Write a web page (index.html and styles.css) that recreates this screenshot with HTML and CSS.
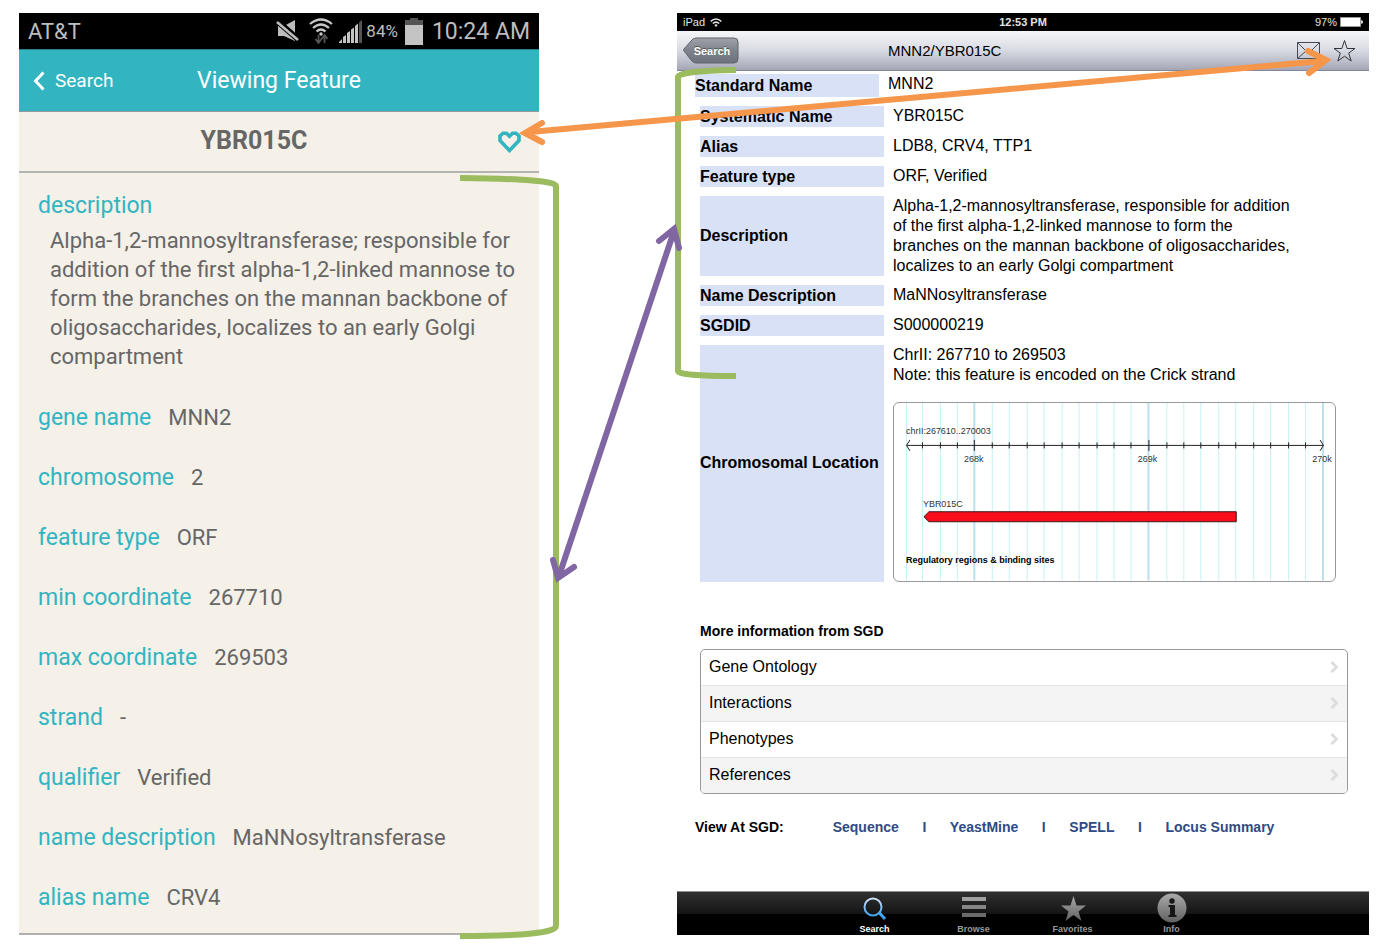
FILE: index.html
```html
<!DOCTYPE html>
<html lang="en">
<head>
<meta charset="utf-8">
<meta name="viewport" content="width=device-width, initial-scale=1">
<title>Feature view comparison</title>
<link rel="stylesheet" href="styles.css">
</head>
<body>
<main class="board">
  <section class="phone" aria-label="Phone screen">
    <div class="phone-status">
      <span class="carrier">AT&amp;T</span>
      <svg class="icon-mute" width="24" height="22" viewBox="0 0 24 22" aria-hidden="true"><path d="M2 6h6l11-6v21L8 16H2z" fill="#bdbdbd"/><path d="M0 0l23 20" stroke="#000" stroke-width="6"/><path d="M1 2l21 18" stroke="#bdbdbd" stroke-width="2.600"/></svg>
      <svg class="icon-wifi" width="24" height="26" viewBox="0 0 24 26" fill="none" aria-hidden="true"><g stroke="#c8c8c8" stroke-width="2.200"><path d="M1 6Q12-3 23 6"/><path d="M4 10Q12 3 20 10"/><path d="M7.500 13.500Q12 9.500 16.500 13.500"/></g><circle cx="12" cy="16" r="1.700" fill="#c8c8c8"/><path d="M9.500 17v7M6.500 21l3 4 3-4M15.500 25v-7M12.500 21l3-4 3 4" stroke="#555" stroke-width="1.800"/></svg>
      <svg class="icon-signal" width="23" height="23" viewBox="0 0 23 23" aria-hidden="true"><path d="M0 23v-1l3-3v4zM4 23v-6l3-2v8zM8 23V13l3-2v12zM12 23V9.500L15 7.500V23zM16 23V6l3-2.500V23z" fill="#c4c4c4"/><path d="M20 23V2.500L23 0v23z" fill="#555"/></svg>
      <span class="percent">84%</span>
      <svg class="icon-battery" width="18" height="27" viewBox="0 0 18 27" aria-hidden="true"><path d="M5 0h8v2h5v5H0V2h5z" fill="#555"/><path d="M0 7h18v20H0z" fill="#c4c4c4"/></svg>
      <span class="clock">10:24 AM</span>
    </div>
    <header class="phone-header">
      <button class="phone-back" type="button"><svg width="12" height="20" viewBox="0 0 12 20" aria-hidden="true"><path d="M10.500 1.500L2.500 10l8 8.500" fill="none" stroke="#fff" stroke-width="3"/></svg>Search</button>
      <h1 class="phone-title">Viewing Feature</h1>
    </header>
    <div class="feature-bar">
      <h2 class="feature-name">YBR015C</h2>
      <button class="heart" type="button" aria-label="Favorite"><svg width="25" height="22" viewBox="0 0 25 22" aria-hidden="true"><path d="M12.500 19.500L3 9.500V5L6 2.200h3.500l3 3 3-3H19L22 5v4.500z" fill="none" stroke="#32b5c1" stroke-width="3.600"/></svg></button>
    </div>
    <dl class="fields">
      <div class="field field-long"><dt>description</dt><dd>Alpha-1,2-mannosyltransferase; responsible for addition of the first alpha-1,2-linked mannose to form the branches on the mannan backbone of oligosaccharides, localizes to an early Golgi compartment</dd></div>
      <div class="field"><dt>gene name</dt><dd>MNN2</dd></div>
      <div class="field"><dt>chromosome</dt><dd>2</dd></div>
      <div class="field"><dt>feature type</dt><dd>ORF</dd></div>
      <div class="field"><dt>min coordinate</dt><dd>267710</dd></div>
      <div class="field"><dt>max coordinate</dt><dd>269503</dd></div>
      <div class="field"><dt>strand</dt><dd>-</dd></div>
      <div class="field"><dt>qualifier</dt><dd>Verified</dd></div>
      <div class="field"><dt>name description</dt><dd>MaNNosyltransferase</dd></div>
      <div class="field"><dt>alias name</dt><dd>CRV4</dd></div>
    </dl>
  </section>

  <section class="tablet" aria-label="Tablet screen">
    <div class="tablet-status">
      <span class="device">iPad <svg width="12" height="9" viewBox="0 0 12 9" fill="none" aria-hidden="true"><path d="M.7 3.300Q6-1.300 11.300 3.300M2.800 5.500Q6 2.800 9.200 5.500" stroke="#e4e4e4" stroke-width="1.600"/><path d="M4.300 7L6 9l1.700-2Q6 5.700 4.300 7z" fill="#e4e4e4"/></svg></span>
      <span class="tablet-clock">12:53 PM</span>
      <span class="charge">97% <svg width="23" height="10" viewBox="0 0 23 10" aria-hidden="true"><path d="M.5.500h20v9H.5z" fill="#fff" stroke="#999"/><path d="M21 3l2 1v2l-2 1z" fill="#ccc"/></svg></span>
    </div>
    <header class="tablet-header">
      <button class="tablet-back" type="button">
        <svg class="back-shape" width="56" height="28" viewBox="0 0 56 28" aria-hidden="true"><defs><linearGradient id="back-fill" x2="0" y2="1"><stop offset="0" stop-color="#a0a3a8"/><stop offset=".5" stop-color="#7d828b"/><stop offset="1" stop-color="#6d737d"/></linearGradient></defs><path d="M13 1h38a4 4 0 0 1 4 4v17a4 4 0 0 1-4 4H13Q10 26 8 23L1 14Q0 13 1 12L8 4Q10 1 13 1z" fill="url(#back-fill)" stroke="#60646d"/></svg>
        <span class="back-label">Search</span>
      </button>
      <h2 class="tablet-title">MNN2/YBR015C</h2>
      <div class="tablet-actions">
        <button type="button" aria-label="Mail"><svg width="23" height="17" viewBox="0 0 23 17" fill="none" stroke="#444b55" aria-hidden="true"><path d="M.5.500h22v16H.5zM.5.500L9 9h5L22.500.500M.5 16.500L9 9M14 9l8.500 7.500"/></svg></button>
        <button type="button" aria-label="Add to favorites"><svg width="23" height="24" viewBox="0 0 23 24" fill="none" stroke="#30353c" aria-hidden="true"><path d="M11.500 1.500l2.600 8H22l-6.300 4.600 2.500 7.900-6.700-4.800L4.800 22l2.500-7.900L1 9.500h7.900z"/></svg></button>
      </div>
    </header>
    <div class="tablet-body">
      <table class="facts facts-first">
        <tr><th scope="row">Standard Name</th><td>MNN2</td></tr>
      </table>
      <table class="facts">
        <tr><th scope="row">Systematic Name</th><td>YBR015C</td></tr>
        <tr><th scope="row">Alias</th><td>LDB8, CRV4, TTP1</td></tr>
        <tr><th scope="row">Feature type</th><td>ORF, Verified</td></tr>
        <tr><th scope="row">Description</th><td><p class="summary">Alpha-1,2-mannosyltransferase, responsible for addition of the first alpha-1,2-linked mannose to form the branches on the mannan backbone of oligosaccharides, localizes to an early Golgi compartment</p></td></tr>
        <tr><th scope="row">Name Description</th><td>MaNNosyltransferase</td></tr>
        <tr><th scope="row">SGDID</th><td>S000000219</td></tr>
        <tr><th scope="row">Chromosomal Location</th><td>ChrII: 267710 to 269503<br>Note: this feature is encoded on the Crick strand
          <div class="map">
            <svg class="map-drawing" viewBox="0 0 442 178" role="img" aria-label="Map of chrII from 267610 to 270003">
              <path class="grid" d="M12.500 0v178M28.500 0v178M46.500 0v178M63.500 0v178M98.500 0v178M115.500 0v178M133.500 0v178M150.500 0v178M168.500 0v178M185.500 0v178M203.500 0v178M220.500 0v178M237.500 0v178M273.500 0v178M290.500 0v178M307.500 0v178M325.500 0v178M342.500 0v178M360.500 0v178M377.500 0v178M395.500 0v178M412.500 0v178"/>
              <path class="grid-major" d="M80.500 0v178M255 0v178M430 0v178"/>
              <path class="axis" d="M13 42.500H430M16 37l-3.500 5.500L16 48M427 37l3.500 5.500L427 48M28.500 39.500v6M46.500 39.500v6M63.500 39.500v6M80.500 37v11M98.500 39.500v6M115.500 39.500v6M133.500 39.500v6M150.500 39.500v6M168.500 39.500v6M185.500 39.500v6M203.500 39.500v6M220.500 39.500v6M237.500 39.500v6M255.500 37v11M273.500 39.500v6M290.500 39.500v6M307.500 39.500v6M325.500 39.500v6M342.500 39.500v6M360.500 39.500v6M377.500 39.500v6M395.500 39.500v6M412.500 39.500v6"/>
              <path class="gene" d="M30 114l5-5H343v10H35z"/>
              <text class="map-text" x="12" y="31">chrII:267610..270003</text>
              <text class="map-text map-tick" x="80" y="59">268k</text>
              <text class="map-text map-tick" x="254" y="59">269k</text>
              <text class="map-text map-tick" x="429" y="59">270k</text>
              <text class="map-text" x="29" y="104">YBR015C</text>
              <text class="map-text map-strong" x="12" y="160">Regulatory regions &amp; binding sites</text>
            </svg>
          </div></td></tr>
      </table>
      <h3 class="more-title">More information from SGD</h3>
      <ul class="more-list">
        <li><a href="#">Gene Ontology<svg width="8" height="12" viewBox="0 0 8 12" aria-hidden="true"><path d="M1.500 1l5 5-5 5"/></svg></a></li>
        <li><a href="#">Interactions<svg width="8" height="12" viewBox="0 0 8 12" aria-hidden="true"><path d="M1.500 1l5 5-5 5"/></svg></a></li>
        <li><a href="#">Phenotypes<svg width="8" height="12" viewBox="0 0 8 12" aria-hidden="true"><path d="M1.500 1l5 5-5 5"/></svg></a></li>
        <li><a href="#">References<svg width="8" height="12" viewBox="0 0 8 12" aria-hidden="true"><path d="M1.500 1l5 5-5 5"/></svg></a></li>
      </ul>
      <div class="view-at">
        <span class="view-label">View At SGD:</span>
        <a href="#">Sequence</a><span class="bar">I</span><a href="#">YeastMine</a><span class="bar">I</span><a href="#">SPELL</a><span class="bar">I</span><a href="#">Locus Summary</a>
      </div>
    </div>
    <nav class="tabs" aria-label="Tablet tabs">
      <svg class="defs" width="0" height="0" aria-hidden="true"><defs><linearGradient id="tab-gray" x2="0" y2="1"><stop offset="0" stop-color="#aaa"/><stop offset="1" stop-color="#606060"/></linearGradient><linearGradient id="tab-blue" gradientUnits="userSpaceOnUse" x1="0" y1="4" x2="0" y2="28"><stop offset="0" stop-color="#dce6f5"/><stop offset=".7" stop-color="#4ea8ee"/><stop offset="1" stop-color="#2ba0f2"/></linearGradient></defs></svg>
      <button class="tab tab-active" type="button"><svg width="30" height="30" viewBox="0 0 30 30" fill="none" stroke="url(#tab-blue)" aria-hidden="true"><circle cx="13" cy="14" r="8.500" stroke-width="2"/><path d="M19 19.500l6 6.500" stroke-width="3"/></svg>Search</button>
      <button class="tab" type="button"><svg width="30" height="30" viewBox="0 0 30 30" aria-hidden="true"><path d="M3 4h24v4H3z" fill="#a0a0a0"/><path d="M3 12h24v4H3z" fill="#858585"/><path d="M3 20h24v4H3z" fill="#6b6b6b"/></svg>Browse</button>
      <button class="tab" type="button"><svg width="30" height="30" viewBox="0 0 30 30" fill="url(#tab-gray)" aria-hidden="true"><path d="M15.500 3l3 9.500H28l-7.500 6 3 9.500-8-6-8 6 3-9.500-7.500-6h9.500z"/></svg>Favorites</button>
      <button class="tab" type="button"><svg width="30" height="30" viewBox="0 0 30 30" aria-hidden="true"><circle cx="15" cy="15" r="14.500" fill="url(#tab-gray)"/><circle cx="15" cy="8" r="2.700" fill="#161616"/><path d="M11.500 12H18v10h1.500v2h-8v-2H13v-8h-1.500z" fill="#161616"/></svg>Info</button>
    </nav>
  </section>

  <svg class="annotations" viewBox="0 0 1380 948" preserveAspectRatio="none" aria-hidden="true">
    <g class="bracket">
      <path d="M460 178Q556 179 556 186V926Q556 936 460 936"/>
      <path d="M736 70Q678 71 678 77V371Q678 376 736 376"/>
    </g>
    <g class="link-orange">
      <path d="M530 132L1322 61"/>
      <path d="M542 123L525 133L542 142M1308 51L1326 60L1309 73"/>
    </g>
    <g class="link-purple">
      <path d="M560 573L673 234"/>
      <path d="M553 560L558 578L574 567M659 241L674 229L679 248"/>
    </g>
  </svg>
</main>
</body>
</html>
```
FILE: styles.css
```css
* { box-sizing: border-box; }
body { margin: 0; background: #fff; color: #000; font-family: "Liberation Sans", Arial, sans-serif; }
h1, h2, h3, p, dl, dd, ul { margin: 0; padding: 0; }
button { border: 0; padding: 0; background: none; color: inherit; font: inherit; cursor: pointer; }
a { text-decoration: none; color: inherit; }
svg { display: block; }

.board {
  position: relative;
  display: grid;
  grid-template-columns: 520fr 692fr;
  column-gap: 138px;
  min-height: 100vh;
  padding: 13px 11px 13px 19px;
}

/* Phone */
.phone { display: flex; flex-direction: column; background: #f5f0e8; border-bottom: 2px solid #b0b0ae; font-family: Roboto, sans-serif; color: #666; }
.phone-status { display: flex; align-items: center; height: 36px; padding: 0 9px; background: #000; color: #bdbdbd; }
.carrier { flex: 1; font-size: 22px; }
.icon-wifi { margin-left: 9px; }
.icon-signal { margin-left: 6px; }
.percent { margin-left: 4px; font-size: 17px; }
.icon-battery { margin-left: 7px; }
.clock { margin-left: 9px; font-size: 23px; }
.phone-header { display: grid; grid-template-columns: 1fr auto 1fr; align-items: center; height: 63px; padding: 0 14px; border-top: 1px solid #26808a; border-bottom: 1px solid #999; background: #32b5c1; color: #fff; }
.phone-back { display: flex; align-items: center; gap: 10px; font-size: 19px; }
.phone-title { font-size: 23px; font-weight: 400; }
.feature-bar { display: grid; grid-template-columns: 1fr auto 1fr; align-items: center; height: 61px; padding: 0 17px 4px; border-bottom: 2px solid #b3b3b1; }
.feature-name { grid-column: 2; padding: 2px 50px 0 0; font-size: 25px; font-weight: 700; }
.heart { justify-self: end; padding-top: 4px; }
.fields { padding: 18px 19px 0; }
.field { display: flex; align-items: baseline; gap: 17px; height: 60px; padding-top: 15px; line-height: 30px; }
.field dt { color: #32b5c1; font-size: 23px; }
.field dd { font-size: 22px; }
.field-long { display: block; height: auto; padding: 0 0 17px; }
.field-long dd { padding: 5px 0 0 12px; line-height: 29px; }

/* Tablet */
.tablet { display: flex; flex-direction: column; }
.tablet-status { display: grid; grid-template-columns: 1fr auto 1fr; align-items: center; height: 18px; padding: 0 6px; background: #000; color: #e4e4e4; font-size: 11px; }
.device, .charge { display: flex; align-items: center; gap: 5px; }
.charge { justify-content: flex-end; gap: 3px; }
.tablet-clock { font-weight: 700; }
.tablet-header { display: grid; grid-template-columns: 205px 1fr auto; align-items: center; height: 40px; padding: 0 13px 0 6px; border-bottom: 1px solid #83879a; background: linear-gradient(#f6f7f9, #d8dae2 50%, #a4a6b6); }
.tablet-back { position: relative; width: 56px; height: 28px; color: #fff; font-size: 11px; font-weight: 700; text-shadow: 0 -1px 0 #555; }
.back-shape { position: absolute; inset: 0; }
.back-label { position: relative; padding-left: 2px; }
.tablet-title { font-size: 15px; font-weight: 400; }
.tablet-actions { display: flex; align-items: center; gap: 13px; }
.tablet-body { flex: 1; padding: 3px 21px 20px 23px; }
.facts { width: 100%; border-spacing: 0 9px; margin: 0 0 -9px; font-size: 16px; line-height: 20px; }
.facts th { width: 184px; height: 21px; padding: 0; background: #d9e1f6; text-align: left; white-space: nowrap; }
.facts td { padding: 0 0 0 9px; vertical-align: top; }
.facts-first { border-spacing: 0; margin: 0 0 0 -5px; }
.facts-first th { height: 23px; }
.summary { max-width: 404px; }
.map { margin: 17px 12px 0 0; border: 1px solid #999; border-radius: 6px; }
.map-drawing { width: 100%; }
.grid { fill: none; stroke: #c5f3f3; }
.grid-major { fill: none; stroke: #bcdff2; stroke-width: 2; }
.axis { fill: none; stroke: #222; }
.gene { fill: #fb0d1b; stroke: #3a1618; stroke-width: 1; }
.map-text { font-family: "Liberation Sans Narrow", "Liberation Sans", sans-serif; font-size: 9px; fill: #333; }
.map-tick { text-anchor: middle; }
.map-strong { font-weight: 700; fill: #000; }
.more-title { margin-top: 40px; font-size: 14px; line-height: 18px; }
.more-list { margin-top: 9px; list-style: none; border: 1px solid #999; border-radius: 5px; overflow: hidden; }
.more-list li:nth-child(even) { background: #f4f4f4; }
.more-list li + li { border-top: 1px solid #e4e4e4; }
.more-list a { display: flex; align-items: center; justify-content: space-between; height: 35px; padding: 0 9px 0 8px; font-size: 16px; }
.more-list path { fill: none; stroke: #ddd; stroke-width: 3; }
.view-at { display: flex; margin: 24px 0 0 -5px; font-size: 14px; font-weight: 700; line-height: 18px; color: #2f4b83; }
.view-label { margin-right: 49px; color: #000; }
.bar { width: 51px; text-align: center; }
.tabs { display: flex; justify-content: center; height: 44px; border-top: 1px solid #8b908b; background: linear-gradient(#303030, #151515 50%, #000 50%); }
.tab { display: flex; flex-direction: column; align-items: center; width: 99px; padding-top: 1px; color: #999; font-size: 9px; font-weight: 700; line-height: 12px; }
.tab-active { color: #fff; }
.defs { position: absolute; }

/* Arrows and brackets across both screens */
.annotations { position: absolute; inset: 0; width: 100%; height: 100%; pointer-events: none; fill: none; }
.bracket { stroke: #9bbb5f; stroke-width: 6; }
.link-orange { stroke: #f6964b; stroke-width: 6; stroke-linecap: round; }
.link-purple { stroke: #8066a2; stroke-width: 6; stroke-linecap: round; }
```
